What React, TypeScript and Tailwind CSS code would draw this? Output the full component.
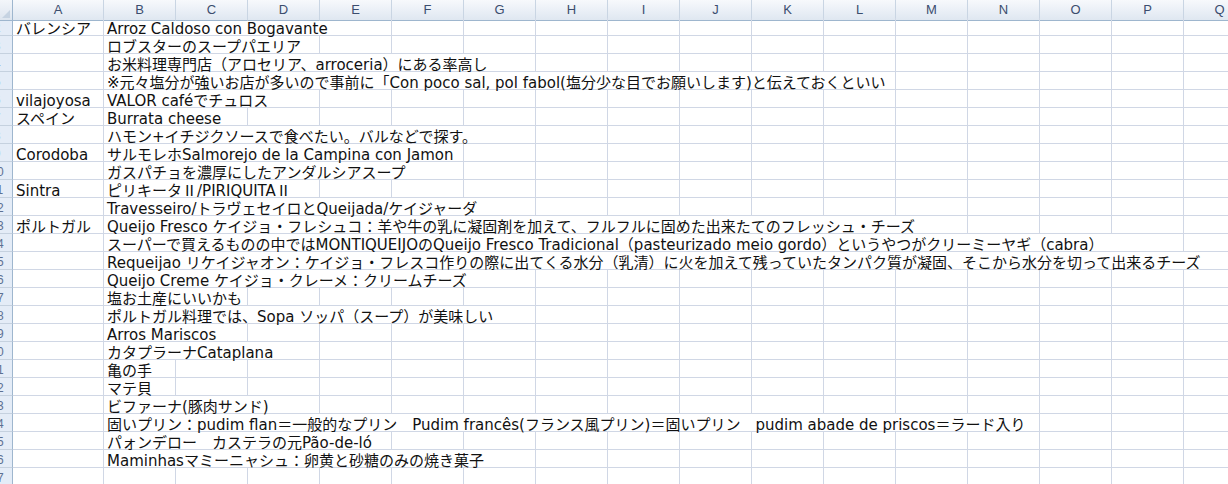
import type { ReactNode } from 'react';

type Row = { a?: string; b?: ReactNode; span: number };

const cols = ['A', 'B', 'C', 'D', 'E', 'F', 'G', 'H', 'I', 'J', 'K', 'L', 'M', 'N', 'O', 'P', 'Q'];

const Jp = ({ children }: { children: ReactNode }) => (
  <span className="font-['Noto_Sans_CJK_JP',sans-serif]">{children}</span>
);

// span = number of columns (from B) the overflowing text covers
const rows: Row[] = [
  { a: 'バレンシア', b: 'Arroz Caldoso con Bogavante', span: 4 },
  { b: 'ロブスターのスープパエリア', span: 3 },
  { b: 'お米料理専門店（アロセリア、arroceria）にある率高し', span: 6 },
  { b: '※元々塩分が強いお店が多いので事前に「Con poco sal, pol fabol(塩分少な目でお願いします)と伝えておくといい', span: 11 },
  { a: 'vilajoyosa', b: 'VALOR caféでチュロス', span: 3 },
  { a: 'スペイン', b: 'Burrata cheese', span: 2 },
  { b: 'ハモン+イチジクソースで食べたい。バルなどで探す。', span: 6 },
  { a: 'Corodoba', b: 'サルモレホSalmorejo de la Campina con Jamon', span: 5 },
  { b: 'ガスパチョを濃厚にしたアンダルシアスープ', span: 5 },
  {
    a: 'Sintra',
    b: (
      <>
        ピリキータ<Jp>Ⅱ</Jp>/PIRIQUITA<Jp>Ⅱ</Jp>
      </>
    ),
    span: 3,
  },
  { b: 'Travesseiro/トラヴェセイロとQueijada/ケイジャーダ', span: 6 },
  { a: 'ポルトガル', b: 'Queijo Fresco ケイジョ・フレシュコ：羊や牛の乳に凝固剤を加えて、フルフルに固めた出来たてのフレッシュ・チーズ', span: 12 },
  { b: 'スーパーで買えるものの中ではMONTIQUEIJOのQueijo Fresco Tradicional（pasteurizado meio gordo）というやつがクリーミーヤギ（cabra）', span: 15 },
  { b: 'Requeijao リケイジャオン：ケイジョ・フレスコ作りの際に出てくる水分（乳清）に火を加えて残っていたタンパク質が凝固、そこから水分を切って出来るチーズ', span: 16 },
  { b: 'Queijo Creme ケイジョ・クレーメ：クリームチーズ', span: 6 },
  { b: '塩お土産にいいかも', span: 2 },
  { b: 'ポルトガル料理では、Sopa ソッパ（スープ）が美味しい', span: 6 },
  { b: 'Arros Mariscos', span: 2 },
  { b: 'カタプラーナCataplana', span: 3 },
  { b: '亀の手', span: 1 },
  { b: 'マテ貝', span: 1 },
  { b: 'ビファーナ(豚肉サンド)', span: 3 },
  { b: '固いプリン：pudim flan＝一般的なプリン　Pudim francês(フランス風プリン)＝固いプリン　pudim abade de priscos＝ラード入り', span: 13 },
  { b: 'パォンデロー　カステラの元Pão-de-ló', span: 4 },
  { b: 'Maminhasマミーニャシュ：卵黄と砂糖のみの焼き菓子', span: 6 },
  { span: 1 },
];

const spanClass: Record<number, string> = {
  1: 'col-span-1',
  2: 'col-span-2',
  3: 'col-span-3',
  4: 'col-span-4',
  5: 'col-span-5',
  6: 'col-span-6',
  7: 'col-span-7',
  8: 'col-span-8',
  9: 'col-span-9',
  10: 'col-span-10',
  11: 'col-span-11',
  12: 'col-span-12',
  13: 'col-span-[13]',
  14: 'col-span-[14]',
  15: 'col-span-[15]',
  16: 'col-span-[16]',
};

const gridCols = 'grid grid-cols-[13px_91px_repeat(16,72px)]';
const cellText = "font-['DejaVu_Sans','Noto_Sans_CJK_JP',sans-serif] text-[15px] leading-[11px] text-[#111] whitespace-nowrap";

const HeaderRow = () => (
  <div className={`${gridCols} h-[18px]`}>
    <div className="relative border-r border-b border-[#9eb6ce] bg-gradient-to-b from-[#f3f6fa] to-[#dde5ef]">
      <div className="absolute right-[2px] bottom-[2px] w-0 h-0 border-l-[8px] border-l-transparent border-b-[8px] border-b-[#c6d3e2]" />
    </div>
    {cols.map((c) => (
      <div
        key={c}
        className="flex items-center justify-center border-r border-r-[#c9d5e3] border-b border-b-[#9eb6ce] bg-gradient-to-b from-[#f7f9fc] to-[#dfe7f1] font-['Liberation_Sans',sans-serif] text-[13px] text-[#3b4d6e]"
      >
        {c}
      </div>
    ))}
  </div>
);

const DataRow = ({ row, num }: { row: Row; num: number }) => {
  const rest = cols.slice(1 + row.span);
  return (
    <div className={`${gridCols} h-[18px]`}>
      <div className="overflow-hidden border-r border-r-[#9eb6ce] border-b border-b-[#c5d1df] bg-[#e4ecf7]">
        <div className="ml-[-19px] w-[32px] text-center font-['Liberation_Sans',sans-serif] text-[12px] leading-[20px] text-[#5d7193]">
          {num}
        </div>
      </div>
      <div className="flex items-end border-r border-b border-[#d0d7e5] pl-[3px]">
        <span className={cellText}>{row.a}</span>
      </div>
      <div className={`${spanClass[row.span]} flex items-end border-r border-b border-[#d0d7e5] pl-[3px]`}>
        <span className={cellText}>{row.b}</span>
      </div>
      {rest.map((c) => (
        <div key={c} className="border-r border-b border-[#d0d7e5]" />
      ))}
    </div>
  );
};

export default function App() {
  return (
    <div className="w-[1228px] h-[484px] overflow-hidden bg-white">
      <HeaderRow />
      {rows.map((row, i) => (
        <DataRow key={i} row={row} num={i + 2} />
      ))}
    </div>
  );
}
